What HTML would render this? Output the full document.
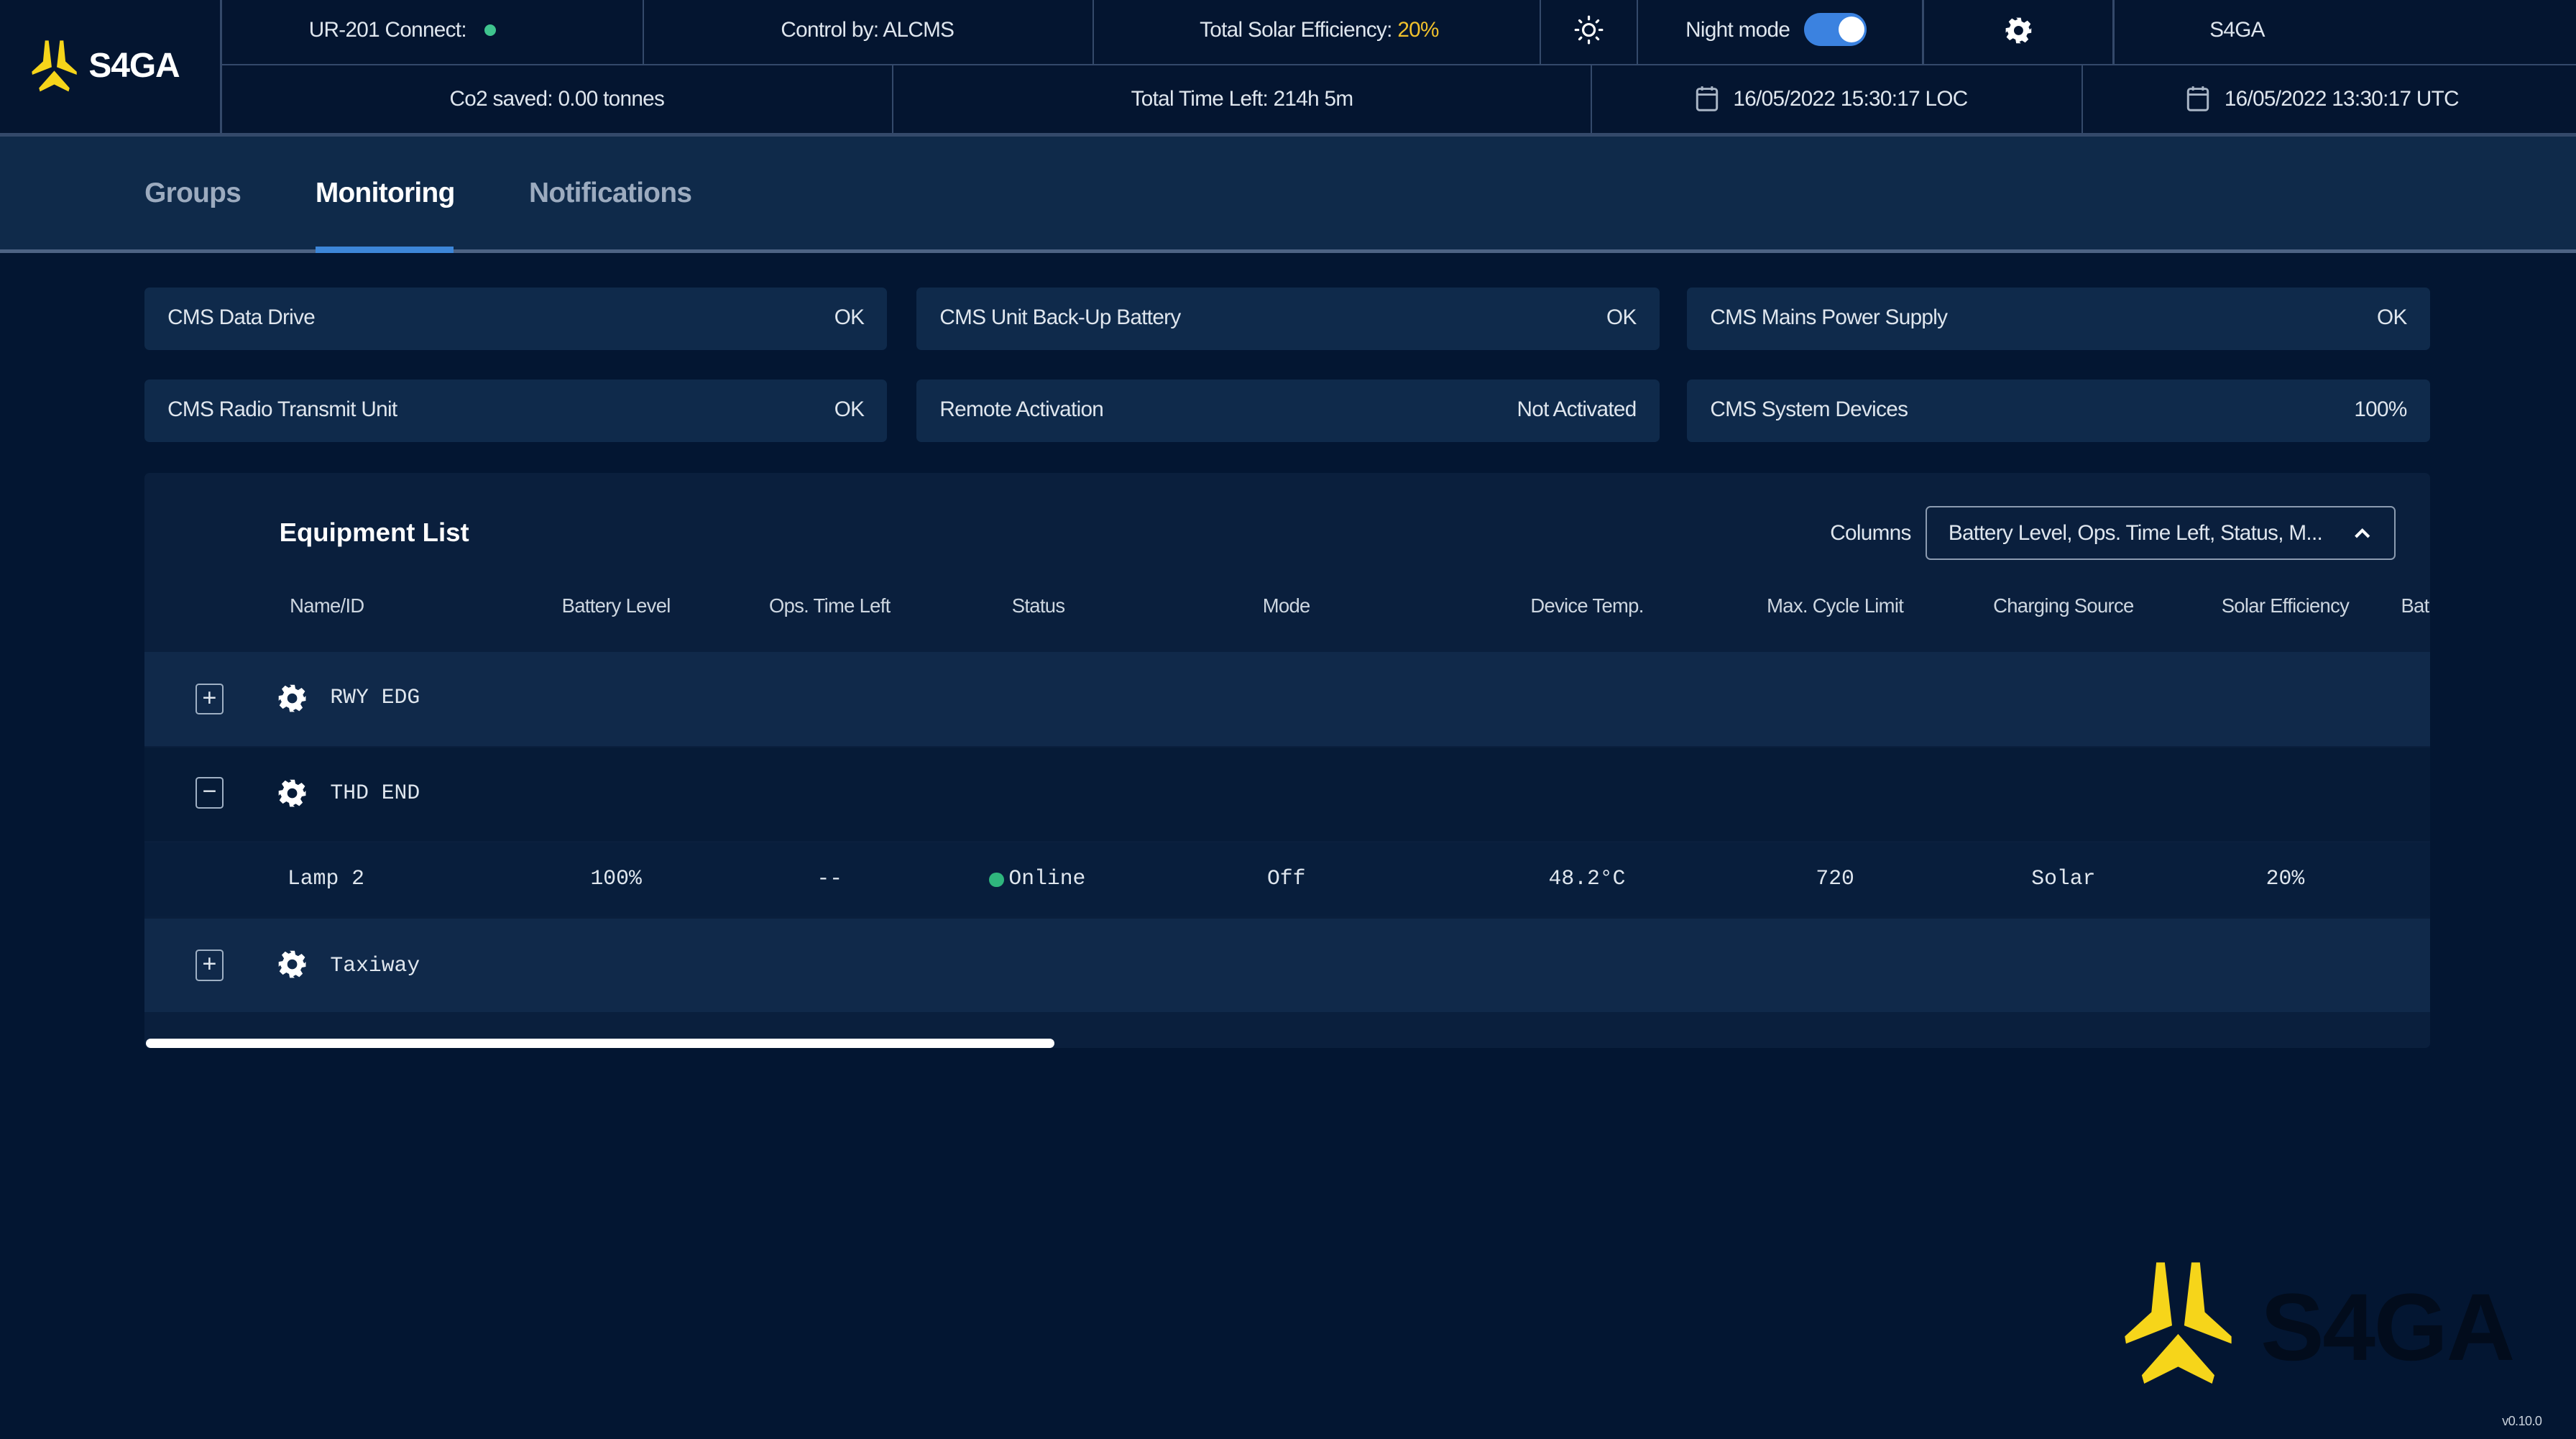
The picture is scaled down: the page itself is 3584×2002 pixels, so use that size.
<!DOCTYPE html>
<html><head><meta charset="utf-8"><style>
html,body{margin:0;padding:0;background:#021530;overflow:hidden}
#w{zoom:2.285714;width:1568px;height:876px;position:relative;background:#031632;font-family:"Liberation Sans",sans-serif;color:#dfe6ee;font-size:13px;letter-spacing:-0.3px}
.a{position:absolute}
.c{position:absolute;text-align:center;transform:translateX(-50%);white-space:nowrap}
.vl{position:absolute;width:1px;background:#34496a}
.card{position:absolute;height:38px;background:#0f2a4b;border-radius:3px}
.card span{position:absolute;top:11px;font-size:13px}
.mono{font-family:"Liberation Mono",monospace;letter-spacing:0;font-size:13px}
.hd{position:absolute;top:362px;font-size:12px;transform:translateX(-50%);white-space:nowrap;color:#cdd6e0}
.box{position:absolute;left:119px;width:17px;height:19px;border:1px solid #9fb0c4;border-radius:2px;box-sizing:border-box;color:#dfe6ee;font-size:15px;line-height:16px;text-align:center;letter-spacing:0}
</style></head><body><div id="w">
<svg width="0" height="0" style="position:absolute"><defs>
<symbol id="lg" viewBox="75 155 455 515"><polygon fill="#f6d51a" points="210,165 245,165 275,425 85,500 80,470 190,370"/><polygon fill="#f6d51a" points="390,165 355,165 325,425 520,500 520,470 410,370"/><polygon fill="#f6d51a" points="150,630 300,460 450,630 440,665 300,595 160,665"/></symbol>
<symbol id="gr" viewBox="0 0 24 24"><path fill="#fff" d="M10 1h4l.6 3.2 2.2 1.1 2.8-1.8 2.8 2.8-1.8 2.8 1.1 2.2L23 10v4l-3.2.6-1.1 2.2 1.8 2.8-2.8 2.8-2.8-1.8-2.2 1.1L14 23h-4l-.6-3.2-2.2-1.1-2.8 1.8-2.8-2.8 1.8-2.8-1.1-2.2L1 14v-4l3.2-.6 1.1-2.2-1.8-2.8 2.8-2.8 2.8 1.8 2.2-1.1z M12 8a4 4 0 1 0 0 8a4 4 0 1 0 0-8z" fill-rule="evenodd"/></symbol>
<symbol id="cal" viewBox="0 0 14 16"><rect x="1" y="2" width="12" height="13" rx="1.5" fill="none" stroke="#aab6c6" stroke-width="1.3"/><line x1="1" y1="5.5" x2="13" y2="5.5" stroke="#aab6c6" stroke-width="1.3"/><line x1="4" y1="0.5" x2="4" y2="3" stroke="#aab6c6" stroke-width="1.3"/><line x1="10" y1="0.5" x2="10" y2="3" stroke="#aab6c6" stroke-width="1.3"/></symbol>
</defs></svg>

<!-- header -->
<div class="a" style="left:0;top:0;width:1568px;height:82px;background:#041530"></div>
<div class="a" style="left:134px;top:39px;width:1434px;height:1px;background:#34496a"></div>
<div class="a" style="left:0;top:81px;width:1568px;height:2px;background:#34496a"></div>
<div class="vl" style="left:134px;top:0;height:82px"></div>
<div class="vl" style="left:391px;top:0;height:39px"></div>
<div class="vl" style="left:665px;top:0;height:39px"></div>
<div class="vl" style="left:937px;top:0;height:39px"></div>
<div class="vl" style="left:996px;top:0;height:39px"></div>
<div class="vl" style="left:1170px;top:0;height:39px"></div>
<div class="vl" style="left:1286px;top:0;height:39px"></div>
<div class="vl" style="left:543px;top:40px;height:42px"></div>
<div class="vl" style="left:968px;top:40px;height:42px"></div>
<div class="vl" style="left:1267px;top:40px;height:42px"></div>
<svg class="a" style="left:16px;top:24px" width="34" height="32"><use href="#lg"/></svg>
<div class="a" style="left:54px;top:28px;font-size:21px;font-weight:bold;color:#fff;letter-spacing:-0.5px">S4GA</div>
<div class="a" style="left:188px;top:11px">UR-201 Connect:</div>
<div class="a" style="left:295px;top:15px;width:7px;height:7px;border-radius:50%;background:#3fc48e"></div>
<div class="c" style="left:528px;top:11px">Control by: ALCMS</div>
<div class="c" style="left:803px;top:11px">Total Solar Efficiency: <span style="color:#f0c02c">20%</span></div>
<svg class="a" style="left:958px;top:9px" width="18" height="18" viewBox="0 0 18 18"><circle cx="9" cy="9" r="3.5" fill="none" stroke="#fff" stroke-width="1.4"/><g stroke="#fff" stroke-width="1.4" stroke-linecap="round"><line x1="9" y1="1" x2="9" y2="2.5"/><line x1="9" y1="15.5" x2="9" y2="17"/><line x1="1" y1="9" x2="2.5" y2="9"/><line x1="15.5" y1="9" x2="17" y2="9"/><line x1="3.3" y1="3.3" x2="4.3" y2="4.3"/><line x1="13.7" y1="13.7" x2="14.7" y2="14.7"/><line x1="3.3" y1="14.7" x2="4.3" y2="13.7"/><line x1="13.7" y1="4.3" x2="14.7" y2="3.3"/></g></svg>
<div class="a" style="left:1026px;top:11px">Night mode</div>
<div class="a" style="left:1098px;top:8px;width:38px;height:20px;border-radius:10px;background:#3b82e0"></div>
<div class="a" style="left:1119px;top:10px;width:16px;height:16px;border-radius:50%;background:#fff"></div>
<svg class="a" style="left:1220px;top:10px" width="17" height="17"><use href="#gr"/></svg>
<div class="a" style="left:1345px;top:11px">S4GA</div>
<div class="c" style="left:339px;top:53px">Co2 saved: 0.00 tonnes</div>
<div class="c" style="left:756px;top:53px">Total Time Left: 214h 5m</div>
<svg class="a" style="left:1032px;top:52px" width="14" height="16"><use href="#cal"/></svg>
<div class="a" style="left:1055px;top:53px">16/05/2022 15:30:17 LOC</div>
<svg class="a" style="left:1331px;top:52px" width="14" height="16"><use href="#cal"/></svg>
<div class="a" style="left:1354px;top:53px">16/05/2022 13:30:17 UTC</div>

<!-- tabs -->
<div class="a" style="left:0;top:83px;width:1568px;height:70px;background:#0f2a4a"></div>
<div class="a" style="left:0;top:152px;width:1568px;height:2px;background:#4d6384"></div>
<div class="a" style="left:88px;top:108px;font-size:17px;font-weight:bold;color:#9cabbf">Groups</div>
<div class="a" style="left:192px;top:108px;font-size:17px;font-weight:bold;color:#fff">Monitoring</div>
<div class="a" style="left:322px;top:108px;font-size:17px;font-weight:bold;color:#9cabbf">Notifications</div>
<div class="a" style="left:192px;top:150px;width:84px;height:4px;background:#3d86d8"></div>

<!-- cards -->
<div class="card" style="left:88px;top:175px;width:452px"><span style="left:14px">CMS Data Drive</span><span style="right:14px">OK</span></div>
<div class="card" style="left:558px;top:175px;width:452px"><span style="left:14px">CMS Unit Back-Up Battery</span><span style="right:14px">OK</span></div>
<div class="card" style="left:1027px;top:175px;width:452px"><span style="left:14px">CMS Mains Power Supply</span><span style="right:14px">OK</span></div>
<div class="card" style="left:88px;top:231px;width:452px"><span style="left:14px">CMS Radio Transmit Unit</span><span style="right:14px">OK</span></div>
<div class="card" style="left:558px;top:231px;width:452px"><span style="left:14px">Remote Activation</span><span style="right:14px">Not Activated</span></div>
<div class="card" style="left:1027px;top:231px;width:452px"><span style="left:14px">CMS System Devices</span><span style="right:14px">100%</span></div>

<!-- equipment -->
<div class="a" style="left:88px;top:288px;width:1391px;height:350px;background:#0a1f3d;border-radius:3px"></div>
<div class="a" style="left:170px;top:315px;font-size:16px;font-weight:bold;color:#fff;letter-spacing:0">Equipment List</div>
<div class="a" style="left:1114px;top:317px">Columns</div>
<div class="a" style="left:1172px;top:308px;width:286px;height:33px;border:1px solid #8c9bb0;border-radius:3px;box-sizing:border-box"></div>
<div class="a" style="left:1186px;top:317px">Battery Level, Ops. Time Left, Status, M...</div>
<svg class="a" style="left:1432px;top:320px" width="12" height="10"><polyline points="2,7 6,3 10,7" fill="none" stroke="#fff" stroke-width="1.8"/></svg>
<div class="hd" style="left:199px">Name/ID</div>
<div class="hd" style="left:375px">Battery Level</div>
<div class="hd" style="left:505px">Ops. Time Left</div>
<div class="hd" style="left:632px">Status</div>
<div class="hd" style="left:783px">Mode</div>
<div class="hd" style="left:966px">Device Temp.</div>
<div class="hd" style="left:1117px">Max. Cycle Limit</div>
<div class="hd" style="left:1256px">Charging Source</div>
<div class="hd" style="left:1391px">Solar Efficiency</div>
<div class="hd" style="left:1470px">Bat</div>

<div class="a" style="left:88px;top:397px;width:1391px;height:57px;background:#10294a"></div>
<div class="a" style="left:88px;top:455px;width:1391px;height:57px;background:#061b37"></div>
<div class="a" style="left:88px;top:513px;width:1391px;height:45px;background:#081e3c"></div>
<div class="a" style="left:88px;top:559px;width:1391px;height:57px;background:#10294a"></div>

<div class="box" style="top:416px">+</div>
<div class="box" style="top:473px">−</div>
<div class="box" style="top:578px">+</div>
<svg class="a" style="left:169px;top:416px" width="18" height="18"><use href="#gr"/></svg>
<svg class="a" style="left:169px;top:474px" width="18" height="18"><use href="#gr"/></svg>
<svg class="a" style="left:169px;top:578px" width="18" height="18"><use href="#gr"/></svg>
<div class="a mono" style="left:201px;top:417px">RWY EDG</div>
<div class="a mono" style="left:201px;top:475px">THD END</div>
<div class="a mono" style="left:201px;top:580px">Taxiway</div>
<div class="a mono" style="left:175px;top:527px">Lamp 2</div>
<div class="c mono" style="left:375px;top:527px">100%</div>
<div class="c mono" style="left:505px;top:527px">--</div>
<div class="a" style="left:602px;top:531px;width:9px;height:9px;border-radius:50%;background:#2fb67d"></div>
<div class="a mono" style="left:614px;top:527px">Online</div>
<div class="c mono" style="left:783px;top:527px">Off</div>
<div class="c mono" style="left:966px;top:527px">48.2°C</div>
<div class="c mono" style="left:1117px;top:527px">720</div>
<div class="c mono" style="left:1256px;top:527px">Solar</div>
<div class="c mono" style="left:1391px;top:527px">20%</div>
<div class="a" style="left:89px;top:632px;width:553px;height:6px;border-radius:3px;background:#fff"></div>

<!-- big logo -->
<svg class="a" style="left:1283px;top:767px" width="86" height="76"><use href="#lg"/></svg>
<div class="a" style="left:1376px;top:775px;font-size:58px;font-weight:bold;color:#020c1c;letter-spacing:-1px">S4GA</div>
<div class="a" style="left:1523px;top:860px;font-size:8px;color:#c8d0da">v0.10.0</div>
</div></body></html>
